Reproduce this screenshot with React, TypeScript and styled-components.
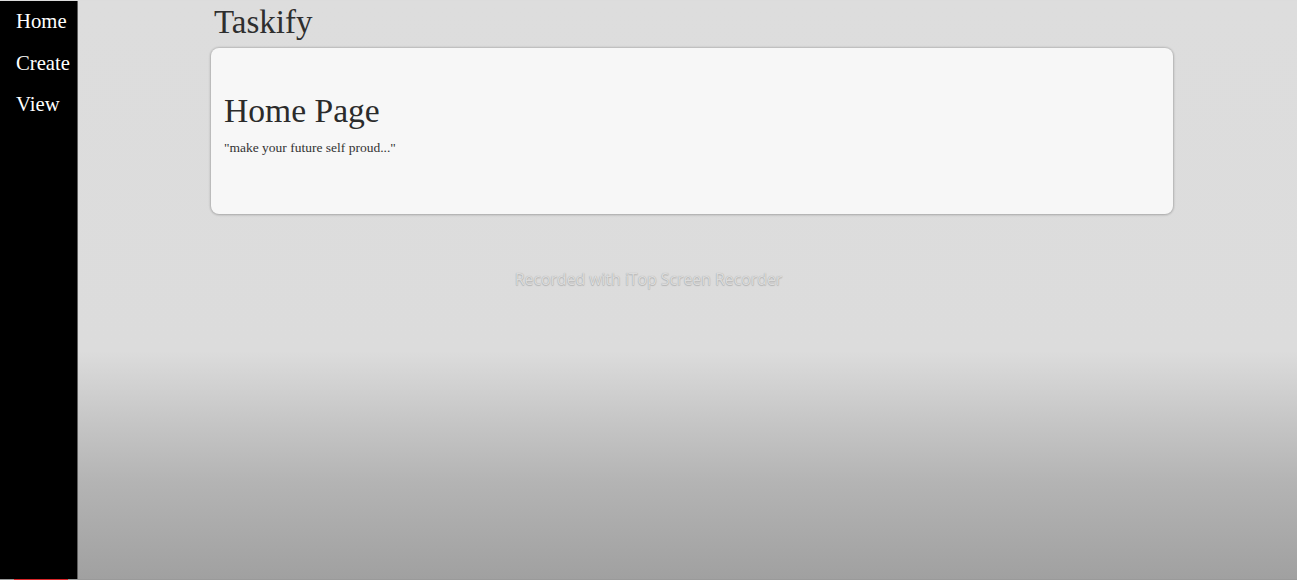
import React from "react";
import styled, { createGlobalStyle } from "styled-components";

const Global = createGlobalStyle`
  html, body { margin: 0; padding: 0; }
  body {
    width: 1297px;
    height: 580px;
    overflow: hidden;
    font-family: "Liberation Serif", "Times New Roman", serif;
    background: #dddddd;
  }
`;

const Screen = styled.div`
  position: relative;
  width: 1297px;
  height: 580px;
  display: flex;
  box-sizing: border-box;
  border-top: 1px solid #dcdcdc;
  border-bottom: 1px solid #9a9a9a;
  background: linear-gradient(
    to bottom,
    #dddddd 0px,
    #dcdcdc 350px,
    #c6c6c6 420px,
    #b4b4b4 480px,
    #a0a0a0 580px
  );
`;

const Sidebar = styled.nav`
  width: 77px;
  flex: 0 0 77px;
  background: #000;
  border-right: 1px solid #5e5e5e;
  display: flex;
  flex-direction: column;
  padding-top: 0;
  box-sizing: content-box;
`;

const NavLink = styled.a`
  color: #fff;
  font-size: 20.7px;
  line-height: 41.5px;
  padding-left: 16px;
  text-decoration: none;
`;

const Main = styled.main`
  flex: 1;
  display: flex;
  flex-direction: column;
  padding-left: 133px;
`;

const Title = styled.h1`
  margin: 0;
  padding-left: 3px;
  font-size: 33px;
  font-weight: normal;
  line-height: 42px;
  color: #2e2e2e;
`;

const Card = styled.section`
  width: 962px;
  height: 166px;
  margin-top: 5px;
  box-sizing: border-box;
  background: #f7f7f7;
  border-radius: 8px;
  box-shadow: 0 0 2px 1px rgba(0, 0, 0, 0.16), 0 1px 3px rgba(0, 0, 0, 0.1);
  padding: 41px 13px 0;
`;

const Heading = styled.h2`
  margin: 0;
  font-size: 33.6px;
  font-weight: normal;
  line-height: 44px;
  color: #2b2b2b;
`;

const Quote = styled.p`
  margin: 7px 0 0;
  font-size: 13.5px;
  line-height: 16px;
  color: #333;
`;

const Watermark = styled.div`
  position: absolute;
  left: 0;
  right: 0;
  top: 267px;
  text-align: center;
  font-family: "Open Sans", "Noto Sans", sans-serif;
  font-size: 16px;
  font-weight: 400;
  letter-spacing: -0.1px;
  color: #dcdcdc;
  text-shadow: 0 0 1px #a4a4a4, 0 1px 1px #b8b8b8;
  pointer-events: none;
`;

const Progress = styled.div`
  position: absolute;
  left: 14px;
  bottom: -1px;
  width: 54px;
  height: 1px;
  background: #d8262a;
`;

export default function App() {
  return (
    <>
      <Global />
      <Screen>
        <Sidebar>
          <NavLink href="#">Home</NavLink>
          <NavLink href="#">Create</NavLink>
          <NavLink href="#">View</NavLink>
        </Sidebar>
        <Main>
          <Title>Taskify</Title>
          <Card>
            <Heading>Home Page</Heading>
            <Quote>"make your future self proud..."</Quote>
          </Card>
        </Main>
        <Watermark>Recorded with iTop Screen Recorder</Watermark>
        <Progress />
      </Screen>
    </>
  );
}
